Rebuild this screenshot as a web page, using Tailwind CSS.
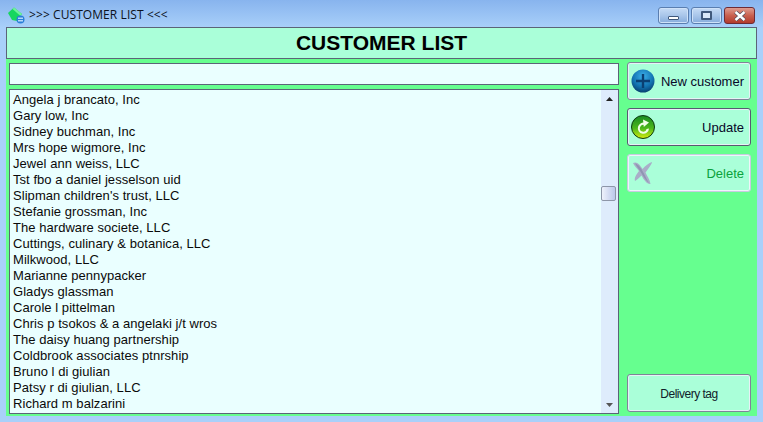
<!DOCTYPE html>
<html lang="en">
<head>
<meta charset="UTF-8">
<script src="https://cdn.jsdelivr.net/npm/@tailwindcss/browser@4"></script>
<title>&gt;&gt;&gt; CUSTOMER LIST &lt;&lt;&lt;</title>
</head>
<body class="w-[763px] h-[422px] overflow-hidden flex flex-col bg-[#a9d0fa] font-['Liberation_Sans',sans-serif] text-[13px] text-black">
  <!-- title bar -->
  <div class="h-[27px] shrink-0 flex items-start pl-[7px] pr-[8px] bg-gradient-to-b from-[#88b4ee] to-[#a8cff9]">
    <svg class="mt-[7px] w-[18px] h-[17px]" viewBox="0 0 18 17">
      <path d="M1 6 L7 0.5 L15 7 L10 14 L5 13 Z" fill="#17d65f"/>
      <path d="M7 0.5 L15 7 L13.5 9 L5.5 2 Z" fill="#6ff29a"/>
      <circle cx="13.5" cy="12.5" r="4" fill="#2a7fd8"/>
      <rect x="11" y="10.6" width="5" height="1.2" fill="#d8ecff"/>
      <rect x="11" y="13.2" width="5" height="1.2" fill="#d8ecff"/>
    </svg>
    <span class="ml-[4px] mt-[7px] leading-[16px] font-['Open_Sans',sans-serif] text-[12px] tracking-[0.08px] text-[#0c1220]">&gt;&gt;&gt; CUSTOMER LIST &lt;&lt;&lt;</span>
    <div class="ml-auto mt-[7px] flex gap-[2px]">
      <div class="w-[31px] h-[17px] rounded-[3px] border border-[#5a7eb0] bg-gradient-to-b from-[#c6dcf6] via-[#a9c6ea] to-[#86acdc] shadow-[inset_0_0_0_1px_#cfe2f8] flex items-center justify-center">
        <div class="w-[11px] h-[4px] mt-[4px] bg-white border border-[#40597c] rounded-[1px]"></div>
      </div>
      <div class="w-[31px] h-[17px] rounded-[3px] border border-[#5a7eb0] bg-gradient-to-b from-[#c6dcf6] via-[#a9c6ea] to-[#86acdc] shadow-[inset_0_0_0_1px_#cfe2f8] flex items-center justify-center">
        <div class="w-[11px] h-[9px] bg-[#dbe9f9] border-2 border-[#40597c] rounded-[1px]"></div>
      </div>
      <div class="w-[31px] h-[17px] rounded-[3px] border border-[#6e2b35] bg-gradient-to-b from-[#dd9c90] via-[#c9604f] to-[#b23a2c] flex items-center justify-center">
        <svg class="w-[14px] h-[10px]" viewBox="0 0 14 10"><path d="M2.5 1 L11.5 9 M11.5 1 L2.5 9" stroke="#4a4f5f" stroke-width="3.8"/><path d="M2.5 1 L11.5 9 M11.5 1 L2.5 9" stroke="#fff" stroke-width="2.4"/></svg>
      </div>
    </div>
  </div>

  <!-- client area -->
  <div class="mx-[6px] w-[751px] h-[389px] flex flex-col bg-[#66ff8f]">
    <div class="h-[32px] shrink-0 border border-[#5b6478] bg-[#aaffd9] flex items-center justify-center pb-[1px] text-[21px] leading-none font-bold">CUSTOMER LIST</div>
    <div class="flex-1 flex pl-[3px] pt-[3px] pb-[2px] min-h-0">
      <div class="w-[610px] pt-[1px] flex flex-col gap-[4px]">
        <div class="h-[22px] shrink-0 border border-[#5b6478] bg-[#eaffff]"></div>
        <div class="flex-1 min-h-0 flex border border-[#5b6478] bg-[#eaffff] overflow-hidden">
          <ul class="flex-1 pl-[3px] pt-[2px] text-[13px] tracking-[0.05px] leading-[16px] text-[#0a0a0a]">
            <li>Angela j brancato, Inc</li>
            <li>Gary low, Inc</li>
            <li>Sidney buchman, Inc</li>
            <li>Mrs hope wigmore, Inc</li>
            <li>Jewel ann weiss, LLC</li>
            <li>Tst fbo a daniel jesselson uid</li>
            <li>Slipman children's trust, LLC</li>
            <li>Stefanie grossman, Inc</li>
            <li>The hardware societe, LLC</li>
            <li>Cuttings, culinary &amp; botanica, LLC</li>
            <li>Milkwood, LLC</li>
            <li>Marianne pennypacker</li>
            <li>Gladys glassman</li>
            <li>Carole l pittelman</li>
            <li>Chris p tsokos &amp; a angelaki j/t wros</li>
            <li>The daisy huang partnership</li>
            <li>Coldbrook associates ptnrship</li>
            <li>Bruno l di giulian</li>
            <li>Patsy r di giulian, LLC</li>
            <li>Richard m balzarini</li>
          </ul>
          <!-- scrollbar -->
          <div class="w-[17px] shrink-0 bg-[#deecfc] flex flex-col items-center">
            <svg class="mt-[7px] w-[7px] h-[4px]" viewBox="0 0 7 4"><path d="M3.5 0 L7 4 H0 Z" fill="#222"/></svg>
            <div class="mt-[85px] self-start w-[15px] h-[15px] rounded-[2px] border border-[#8d96a8] bg-gradient-to-r from-[#eef2fb] to-[#bcc8ea]"></div>
            <svg class="mt-auto mb-[6px] w-[7px] h-[4px]" viewBox="0 0 7 4"><path d="M0 0 H7 L3.5 4 Z" fill="#555"/></svg>
          </div>
        </div>
      </div>

      <div class="ml-[8px] w-[124px] flex flex-col">
        <button class="h-[38px] shrink-0 flex items-center pl-[3px] pr-[6px] rounded-[3px] border border-[#7e8498] bg-[#aaffd9] text-[13px] shadow-[inset_0_0_0_1px_#e6f2f6]">
          <svg class="w-[24px] h-[24px] shrink-0" viewBox="0 0 24 24">
            <defs><radialGradient id="blue" cx=".5" cy=".3" r=".75"><stop offset="0" stop-color="#3bb0ea"/><stop offset=".6" stop-color="#1272b0"/><stop offset="1" stop-color="#063764"/></radialGradient></defs>
            <circle cx="12" cy="12" r="11.5" fill="url(#blue)"/>
            <path d="M10.8 5 h2.4 v5.8 H19 v2.4 h-5.8 V19 h-2.4 v-5.8 H5 v-2.4 h5.8 Z" fill="#0a3f72"/>
          </svg>
          <span class="ml-auto pt-[1px] text-[#08082a]">New customer</span>
        </button>
        <button class="mt-[8px] h-[38px] shrink-0 flex items-center pl-[3px] pr-[6px] rounded-[3px] border border-[#565c70] bg-[#aaffd9] text-[13px] shadow-[inset_0_0_0_1px_#e6f2f6]">
          <svg class="w-[24px] h-[24px] shrink-0" viewBox="0 0 24 24">
            <defs><linearGradient id="green" x1="0" y1="0" x2="0" y2="1"><stop offset="0" stop-color="#178a22"/><stop offset=".55" stop-color="#4cb81c"/><stop offset="1" stop-color="#d8ee10"/></linearGradient></defs>
            <circle cx="12" cy="12" r="11.5" fill="url(#green)" stroke="#0b3a12" stroke-width="1"/>
            <path d="M14.5 8 A5.6 5.6 0 1 0 18 13.5 L15.6 14 A3.4 3.4 0 1 1 13.4 10 Z" fill="#f1ffe8"/>
            <path d="M12 4.5 L18 7.5 L12.8 12 Z" fill="#f1ffe8"/>
          </svg>
          <span class="ml-auto pt-[1px] text-[#08082a]">Update</span>
        </button>
        <button class="mt-[8px] h-[38px] shrink-0 flex items-center pl-[4px] pr-[6px] rounded-[3px] border border-[#c7cbe0] bg-[#aaffd9] text-[13px] shadow-[inset_0_0_0_1px_#eef6fa]">
          <svg class="w-[22px] h-[26px] shrink-0" viewBox="0 0 22 26">
            <path d="M1 3 C5 1 8 5 10.5 9 C13 6 17 3 20 2 C20 4 16 9 13.5 12.5 C15 16 18 20 18.5 24 C15 24.5 12 20 9.5 15.5 C7 18 5 20 3 21 C2 18 4.5 14 7 11 C5 8.5 2.5 6 1 3 Z" fill="#a9aec8"/>
            <path d="M3 3.5 C6 4 9 8 10.5 11 C13 15 15 20 17 23 C13 20 10 14 8 11 C6 8.5 4.5 6 3 3.5 Z" fill="#8f95b2"/>
          </svg>
          <span class="ml-auto pt-[1px] text-[#0aa23c]">Delete</span>
        </button>
        <button class="mt-auto mb-[2px] h-[38px] shrink-0 flex items-center justify-center pt-[1px] rounded-[3px] border border-[#7e8498] bg-[#aaffd9] text-[12px] tracking-[-0.5px] text-[#10202a] shadow-[inset_0_0_0_1px_#e6f2f6]">Delivery tag</button>
      </div>
    </div>
  </div>
</body>
</html>
